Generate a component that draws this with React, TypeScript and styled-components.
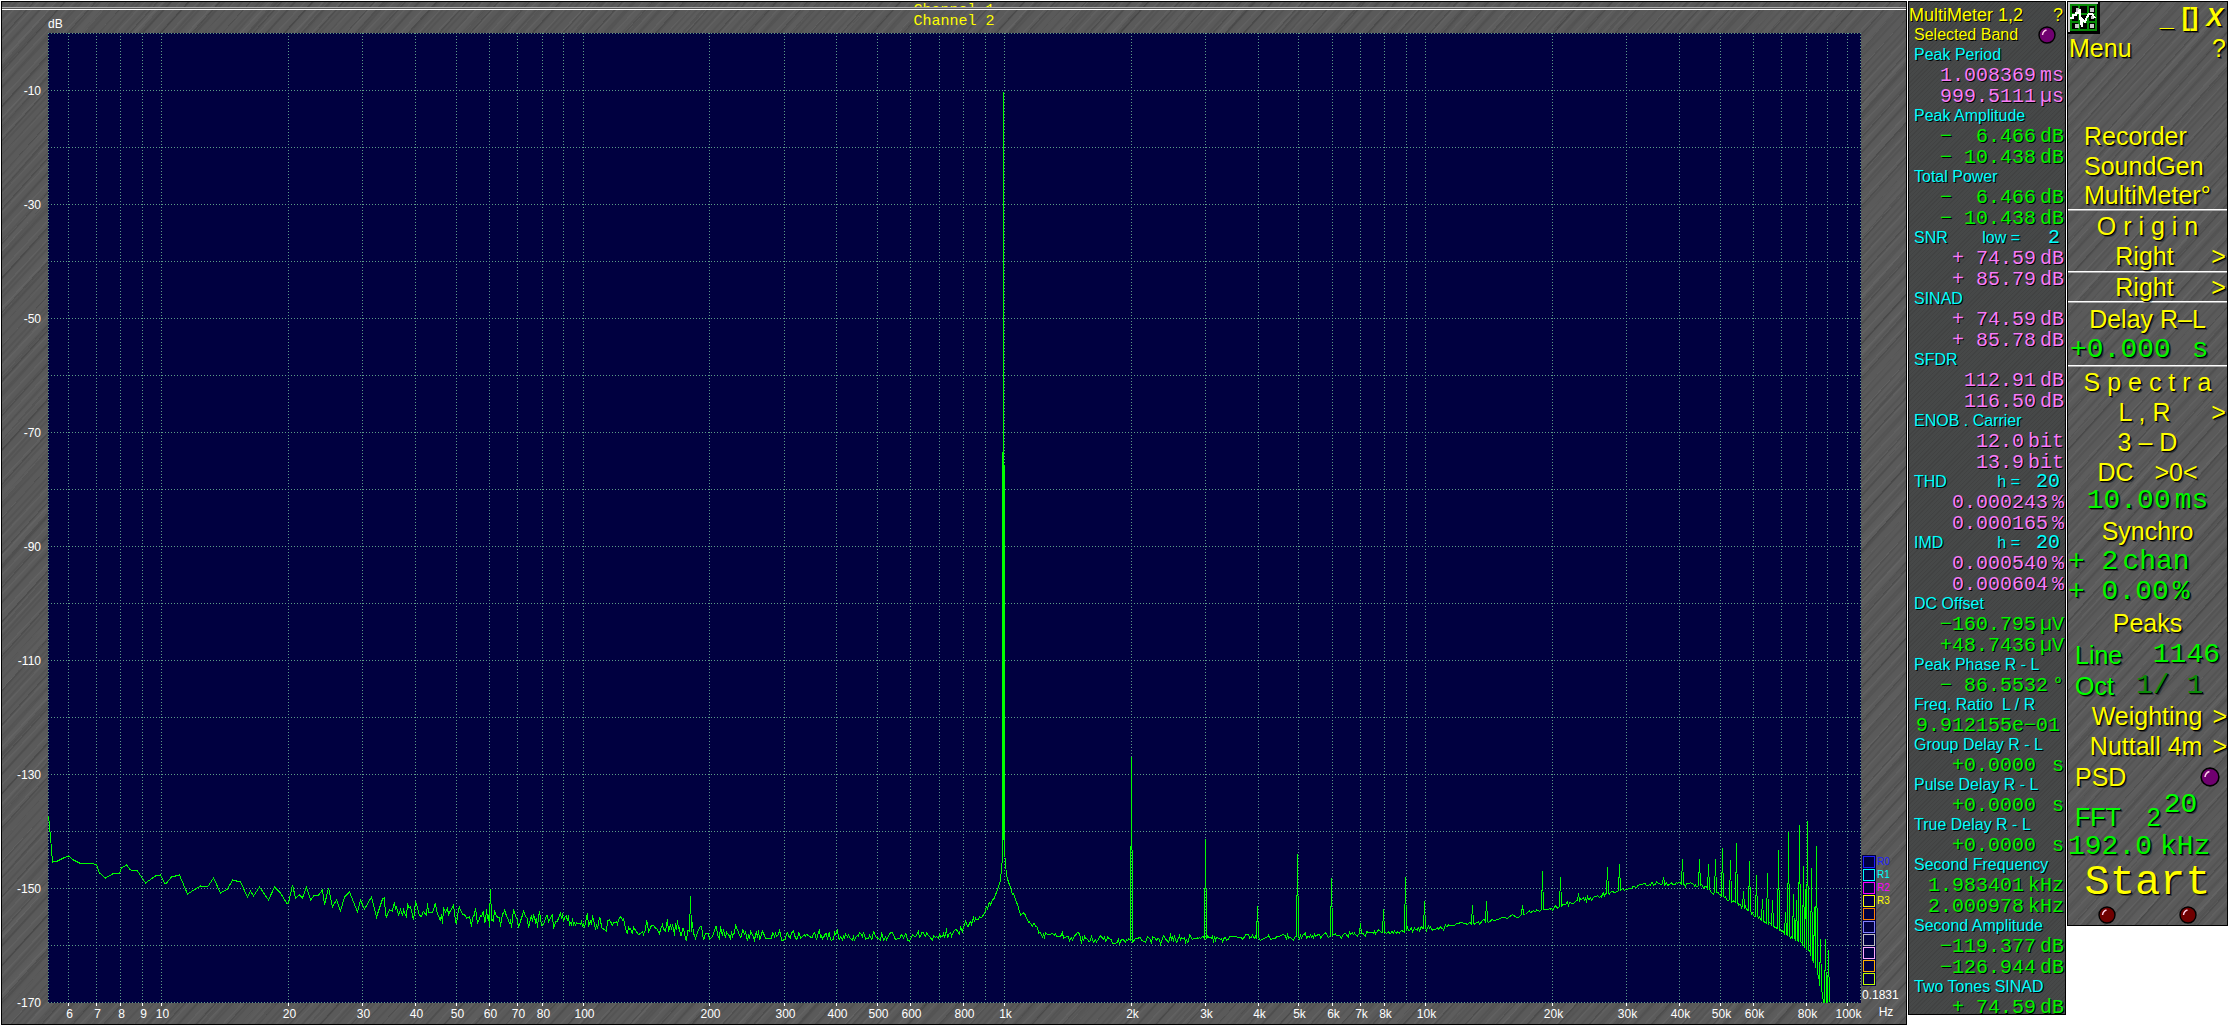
import React from "react";
import styled, { createGlobalStyle, css } from "styled-components";

const SANS = '"Liberation Sans", Arial, sans-serif';
const MONO = '"Liberation Mono", "Courier New", monospace';

const YELLOW = "#ffff00";
const GREEN = "#00f400";
const CYAN = "#00ffff";
const PINK = "#f87cf8";
const DIM_GREEN = "#0a8a0a";

const GlobalStyle = createGlobalStyle`
  * { box-sizing: border-box; }
  body { margin: 0; background: #fff; font-family: ${SANS}; }
  button {
    appearance: none;
    background: none;
    border: 0;
    padding: 0;
    margin: 0;
    font: inherit;
    color: inherit;
    text-shadow: inherit;
    line-height: inherit;
    white-space: pre;
    cursor: pointer;
  }
`;

const brushed = css`
  background-color: #5a5a5a;
  background-image:
    repeating-linear-gradient(132deg, rgba(0, 0, 0, 0.13) 0 1px, transparent 2px 9px, rgba(0, 0, 0, 0.07) 10px 11px, transparent 12px 23px),
    repeating-linear-gradient(133deg, rgba(255, 255, 255, 0.04) 0 1px, transparent 2px 5px, rgba(0, 0, 0, 0.07) 6px 7px, transparent 8px 13px),
    repeating-linear-gradient(131deg, rgba(0, 0, 0, 0.05) 0 2px, transparent 5px 31px, rgba(255, 255, 255, 0.02) 36px 41px);
`;

const Desk = styled.main`
  display: flex;
  align-items: flex-start;
  gap: 1px;
  padding: 1px;
`;

const Analyser = styled.section`
  flex: 1;
  min-width: 0;
  border: 1px solid #000;
  ${brushed}
`;

const ChannelStrip = styled.div`
  height: 5px;
  overflow: hidden;
  text-align: center;
  font: 15px/17px ${MONO};
  color: ${YELLOW};
`;

const StripEdge = styled.div`
  height: 3px;
  background: #555;
  border-top: 1px solid #aaa;
  border-bottom: 1px solid #fff;
`;

const TitleRow = styled.header`
  display: grid;
  grid-template-columns: 1fr auto 1fr;
  height: 23px;
  line-height: 23px;
  color: #fff;
`;

const AxisUnit = styled.span`
  padding: 3px 0 0 46px;
  font-size: 12px;
`;

const ChannelTitle = styled.h1`
  margin: 0;
  font: 15px/23px ${MONO};
  color: ${YELLOW};
`;

const PlotRow = styled.div`
  display: flex;
`;

const PlotArea = styled.div`
  flex: 1;
  min-width: 0;
`;

const PlotSvg = styled.svg`
  display: block;
  width: 100%;
  height: auto;
  font: 12px ${SANS};
`;

const Side = styled.aside`
  width: 44px;
  display: flex;
  flex-direction: column;
  justify-content: flex-end;
  font-size: 12px;
  line-height: 17px;
  color: #fff;
  padding-bottom: 3px;
`;

const Legend = styled.div`
  display: flex;
  flex-direction: column;
  gap: 1px;
  margin-bottom: 2px;
`;

const LegendButton = styled.button<{ $tone: string }>`
  display: flex;
  align-items: center;
  gap: 1px;
  height: 12px;
  font-size: 10px;
  line-height: 12px;
  color: ${(p) => p.$tone};

  &::before {
    content: "";
    width: 12px;
    height: 12px;
    background: #000040;
    border: 1px solid #000040;
    box-shadow: inset 0 0 0 1px ${(p) => p.$tone};
  }
`;

const SideUnit = styled.span`
  padding-left: 4px;
  text-align: center;
`;

const Meter = styled.section`
  width: 158px;
  height: 1014px;
  overflow: hidden;
  border: 1px solid #000;
  padding-top: 3px;
  background-color: #464848;
  background-image: repeating-linear-gradient(135deg, rgba(0, 0, 0, 0.08) 0 1px, transparent 1px 3px);
  text-shadow: 1px 1px 0 #000;
  white-space: pre;
`;

const MeterHead = styled.div<{ $title?: boolean }>`
  display: flex;
  justify-content: space-between;
  align-items: center;
  height: 20px;
  padding: 0 ${(p) => (p.$title ? 2 : 9)}px 0 ${(p) => (p.$title ? 0 : 5)}px;
  font-size: ${(p) => (p.$title ? 18 : 16)}px;
  line-height: 20px;
  color: ${YELLOW};
`;

const MeterLabel = styled.div`
  display: flex;
  justify-content: space-between;
  height: 19px;
  padding: 0 5px;
  font-size: 16px;
  line-height: 19px;
  color: ${CYAN};
`;

const Setting = styled.span`
  display: flex;
  gap: 16px;
`;

const Digits = styled.span`
  font-family: ${MONO};
  font-size: 20px;
`;

const MeterValue = styled.div<{ $tone: string }>`
  display: flex;
  justify-content: flex-end;
  gap: 4px;
  height: 21px;
  padding-right: 1px;
  font: 20px/23px ${MONO};
  color: ${(p) => p.$tone};
`;

const Menu = styled.nav`
  width: 161px;
  border: 1px solid #000;
  font-size: 25px;
  color: ${YELLOW};
  text-shadow: 1px 1px 0 #000, 2px 2px 0 rgba(0, 0, 0, 0.4);
  white-space: pre;
  ${brushed}
`;

const WindowBar = styled.div`
  display: flex;
  align-items: flex-start;
  height: 32px;
`;

const WindowButtons = styled.div`
  flex: 1;
  display: flex;
  justify-content: flex-end;
  gap: 8px;
  padding-right: 4px;
  font-size: 25px;
  font-weight: bold;
  line-height: 30px;
`;

const CloseMark = styled.span`
  font-style: italic;
`;

const Row = styled.div<{
  $h?: number;
  $tone?: string;
  $mono?: boolean;
  $align?: string;
  $pad?: number;
  $gap?: number;
}>`
  display: flex;
  align-items: center;
  justify-content: ${(p) => p.$align ?? "center"};
  gap: ${(p) => p.$gap ?? 0}px;
  height: ${(p) => p.$h ?? 30}px;
  padding: 0 ${(p) => p.$pad ?? 0}px;
  color: ${(p) => p.$tone ?? YELLOW};
  line-height: 28px;
  ${(p) => p.$mono && css`font-family: ${MONO}; font-size: 28px;`}
`;

const Pick = styled.button`
  display: grid;
  grid-template-columns: 11px 1fr 17px;
  align-items: center;
  width: 100%;

  &::before { content: ""; }
`;

const PickFar = styled.button`
  display: flex;
  justify-content: flex-end;
  gap: 10px;
  width: 100%;
  align-items: center;
`;

const Gap = styled.div`
  height: 59px;
`;

const Rule = styled.hr`
  height: 2px;
  margin: 0;
  border: 0;
  background: #fff;
  border-bottom: 1px solid #aaa;
`;

const Num = styled.span<{ $tone?: string }>`
  font-family: ${MONO};
  font-size: 28px;
  color: ${(p) => p.$tone ?? "inherit"};
`;

const Fft = styled.span`
  padding: 8px 3px 0 26px;
`;

const FftLabel = styled.span`
  padding-top: 8px;
`;

const Power = styled.sup`
  font: 28px/24px ${MONO};
  vertical-align: baseline;
  align-self: flex-start;
`;

const StartButton = styled.button`
  display: block;
  width: 100%;
  height: 44px;
  font: 42px/44px ${MONO};
`;

const Lamps = styled.div`
  display: flex;
  justify-content: space-between;
  height: 20px;
  padding: 1px 30px;
`;

const LampSvg = styled.svg`
  display: block;
`;

const Lamp = ({ size, tone }: { size: number; tone: string }) => (
  <LampSvg width={size} height={size} viewBox="0 0 18 18" aria-hidden="true">
    <circle cx="9" cy="9" r="8" fill={tone} stroke="#000" strokeWidth="1.4" />
    <path d="M4.5 9 Q5 5 8.5 4" stroke="#ffd0e8" strokeWidth="1.4" fill="none" />
  </LampSvg>
);

const AppIcon = () => (
  <svg width="32" height="32" viewBox="0 0 32 32" aria-label="Analyser" role="img">
    <rect width="32" height="32" fill="#000" />
    <path d="M0 0H30V2H2V30H0Z" fill="#c8c8c8" />
    <rect x="2" y="2" width="27" height="27" fill="#000" />
    <path d="M2 3H29M2 12H29M2 20H29M2 28H29M3 2V29M11 2V29M20 2V29M28 2V29" stroke="#078a07" strokeWidth="2" />
    <path d="M8 6h3v4h-3zM22 6h4v4h-4zM23 14h3v3h-3zM7 22h4v4h-4zM22 22h4v4h-4z" fill="#c8c8c8" />
    <path d="M2 16H5V13H8V11H10L12 7V16L14 25V17L17 20L19 15L21 12H24L27 16" stroke="#fff" strokeWidth="2" fill="none" shapeRendering="crispEdges" />
  </svg>
);

/* ---- spectrum plot geometry ---- */

const LEFT = 48;
const RIGHT = 1860;
const TOP = 33;
const BOTTOM = 1002;
const freqX = (f: number) => Math.round(161.3 + 421.3 * Math.log10(f / 10)) + 0.5;
const levelY = (db: number) => TOP - db * 5.7 + 0.5;

const GRID: number[] = [];
for (let decade = 1; decade <= 100000; decade *= 10)
  for (let n = 1; n < 10; n++) {
    const f = n * decade;
    if (f >= 6 && f <= 100000) GRID.push(f);
  }
const UNLABELLED = [90, 700, 900, 9000, 70000, 90000];
const LABELLED = GRID.filter((f) => !UNLABELLED.includes(f));
const freqText = (f: number) => (f >= 1000 ? `${f / 1000}k` : `${f}`);

type Pt = [number, number];

const LOW_END: Pt[] = [
  [48, 816], [50, 837], [52, 862], [57, 861], [63, 858], [68, 856], [73, 860], [79, 863], [91, 863], [96, 865],
  [99, 873], [105, 878], [112, 874], [119, 873], [121, 868], [126, 865], [130, 870], [137, 871], [145, 883],
  [155, 876], [160, 875], [164, 883], [166, 883], [171, 877], [179, 875], [187, 894], [200, 886], [207, 887],
  [213, 878], [220, 893], [227, 889], [232, 880], [240, 882], [247, 897], [250, 891], [253, 896], [259, 887],
  [268, 900], [274, 887], [280, 893], [286, 903], [288, 903], [292, 885], [295, 898], [299, 895], [302, 898],
  [306, 887], [310, 900], [314, 895], [318, 895], [322, 890], [324, 905], [328, 888], [332, 907], [336, 900],
  [340, 911], [344, 897], [349, 892], [357, 912], [360, 900], [364, 909], [371, 897], [376, 917], [382, 899],
];

const FLOOR: Pt[] = [
  [383, 906], [420, 911], [460, 914], [490, 918], [540, 921], [583, 923], [620, 925], [680, 931], [710, 933],
  [783, 935], [877, 937], [908, 936], [940, 934], [953, 932], [968, 926], [982, 915], [993, 900], [1000, 880],
  [1002, 857], [1004, 850], [1006, 875], [1011, 890], [1020, 912], [1033, 925], [1042, 934], [1069, 937],
  [1087, 939], [1131, 940], [1240, 938], [1324, 936], [1358, 934], [1391, 932], [1425, 929], [1459, 925],
  [1492, 920], [1526, 913], [1551, 908], [1577, 901], [1606, 894], [1636, 886], [1644, 884], [1678, 883],
  [1699, 886], [1716, 893], [1737, 903], [1758, 917], [1779, 930], [1800, 943], [1810, 953], [1816, 968],
  [1821, 990], [1823, 1002], [1860, 1002],
];

const SPREAD: Pt[] = [[383, 9], [600, 8], [700, 7], [800, 5], [980, 4], [1000, 2], [1060, 4], [1240, 3], [1500, 2], [1860, 2]];

const PEAKS: Pt[] = [
  [490, 889], [690, 896], [1003, 92], [1131, 757], [1205, 839], [1257, 906], [1297, 854], [1331, 878], [1360, 923],
  [1383, 909], [1405, 877], [1424, 901], [1472, 905], [1486, 901], [1522, 905], [1542, 871], [1560, 877],
  [1578, 893], [1607, 867], [1619, 864], [1663, 877], [1682, 859], [1699, 859], [1708, 864], [1715, 859],
  [1722, 848], [1730, 860], [1736, 843], [1743, 891], [1749, 861], [1756, 875], [1762, 899], [1767, 873],
  [1772, 900], [1778, 850], [1785, 912], [1788, 832], [1793, 894], [1796, 900], [1799, 825], [1803, 866],
  [1805, 889], [1807, 821], [1811, 868], [1814, 907], [1816, 846], [1820, 939], [1825, 939], [1828, 950],
];

const interpolate = (pts: Pt[], x: number) => {
  let i = 1;
  while (i < pts.length - 1 && pts[i][0] < x) i++;
  const [x0, y0] = pts[i - 1];
  const [x1, y1] = pts[i];
  return y0 + ((y1 - y0) * (x - x0)) / (x1 - x0);
};

const buildTrace = () => {
  let seed = 41;
  const random = () => {
    seed = (seed * 16807) % 2147483647;
    return seed / 2147483647;
  };
  const pts: Pt[] = [...LOW_END];
  for (let x = 384; x < 1830; x++) {
    const peak = PEAKS.find((p) => p[0] === x);
    const floor = interpolate(FLOOR, x);
    if (peak) {
      pts.push([x - 1, floor], [x, peak[1]], [x + 1, floor]);
      continue;
    }
    const swing = (random() + random() - 1) * interpolate(SPREAD, x) * 1.5;
    if (x > 1822) pts.push([x, BOTTOM]);
    else if (random() > 0.3) pts.push([x, floor + swing]);
  }
  return "M" + pts.map(([x, y]) => `${x + 0.5} ${Math.min(BOTTOM, y).toFixed(1)}`).join("L");
};

const TRACE = buildTrace();
const DECIBELS = Array.from({ length: 18 }, (_, i) => -10 * i);

const Spectrum = () => (
  <PlotSvg viewBox="2 33 1860 991" role="img" aria-label="Spectrum, level against frequency">
    <rect x={LEFT} y={TOP} width={RIGHT - LEFT + 1} height={BOTTOM - TOP + 1} fill="#000040" />
    <g stroke="#5c9c88" strokeDasharray="1 2" shapeRendering="crispEdges">
      {[LEFT + 0.5, ...GRID.map(freqX), RIGHT + 0.5].map((x) => (
        <line key={x} x1={x} x2={x} y1={TOP} y2={BOTTOM} />
      ))}
      {DECIBELS.map((db) => (
        <line key={db} x1={LEFT} x2={RIGHT} y1={levelY(db)} y2={levelY(db)} />
      ))}
    </g>
    <path d={TRACE} fill="none" stroke="#00ff00" shapeRendering="crispEdges" />
    <path d="M1002.5 857V780M1003.5 92V840M1004.5 850V465" stroke="#00ff00" shapeRendering="crispEdges" />
    <g stroke="#fff" shapeRendering="crispEdges">
      {LABELLED.map((f) => (
        <line key={f} x1={freqX(f)} x2={freqX(f)} y1={BOTTOM + 1} y2={BOTTOM + 4} />
      ))}
    </g>
    <g fill="#fff" textAnchor="middle">
      {LABELLED.map((f) => (
        <text key={f} x={freqX(f) + 1} y="1018">{freqText(f)}</text>
      ))}
    </g>
    <g fill="#fff" textAnchor="end">
      {DECIBELS.filter((db) => db % 20 !== 0).map((db) => (
        <text key={db} x="41" y={levelY(db) + 4}>{db}</text>
      ))}
    </g>
  </PlotSvg>
);

const TONES: [string, string][] = [
  ["#2020ff", "R0"], ["#00ffff", "R1"], ["#ff00ff", "R2"], ["#ffff00", "R3"], ["#ff8000", ""],
  ["#8080ff", ""], ["#c0c0c0", ""], ["#ffa8ff", ""], ["#ffb000", ""], ["#c0ff00", ""],
];

type Reading = { label: string; setting?: [string, string]; tone: string; values: [string, string][] };

const READINGS: Reading[] = [
  { label: "Peak Period", tone: PINK, values: [["1.008369", "ms"], ["999.5111", "µs"]] },
  { label: "Peak Amplitude", tone: GREEN, values: [["−  6.466", "dB"], ["− 10.438", "dB"]] },
  { label: "Total Power", tone: GREEN, values: [["−  6.466", "dB"], ["− 10.438", "dB"]] },
  { label: "SNR", setting: ["low =", " 2"], tone: PINK, values: [["+ 74.59", "dB"], ["+ 85.79", "dB"]] },
  { label: "SINAD", tone: PINK, values: [["+ 74.59", "dB"], ["+ 85.78", "dB"]] },
  { label: "SFDR", tone: PINK, values: [["112.91", "dB"], ["116.50", "dB"]] },
  { label: "ENOB . Carrier", tone: PINK, values: [["12.0", "bit"], ["13.9", "bit"]] },
  { label: "THD", setting: ["h =", "20"], tone: PINK, values: [["0.000243", "%"], ["0.000165", "%"]] },
  { label: "IMD", setting: ["h =", "20"], tone: PINK, values: [["0.000540", "%"], ["0.000604", "%"]] },
  { label: "DC Offset", tone: GREEN, values: [["−160.795", "µV"], ["+48.7436", "µV"]] },
  { label: "Peak Phase R - L", tone: GREEN, values: [["− 86.5532", "°"]] },
  { label: "Freq. Ratio  L / R", tone: GREEN, values: [["9.912155e−01", ""]] },
  { label: "Group Delay R - L", tone: GREEN, values: [["+0.0000", " s"]] },
  { label: "Pulse Delay R - L", tone: GREEN, values: [["+0.0000", " s"]] },
  { label: "True Delay R - L", tone: GREEN, values: [["+0.0000", " s"]] },
  { label: "Second Frequency", tone: GREEN, values: [["1.983401", "kHz"], ["2.000978", "kHz"]] },
  { label: "Second Amplitude", tone: GREEN, values: [["−119.377", "dB"], ["−126.944", "dB"]] },
  { label: "Two Tones SINAD", tone: GREEN, values: [["+ 74.59", "dB"]] },
];

export default function App() {
  return (
    <Desk>
      <GlobalStyle />
      <Analyser>
        <ChannelStrip>Channel 1</ChannelStrip>
        <StripEdge />
        <TitleRow>
          <AxisUnit>dB</AxisUnit>
          <ChannelTitle>Channel 2</ChannelTitle>
        </TitleRow>
        <PlotRow>
          <PlotArea>
            <Spectrum />
          </PlotArea>
          <Side>
            <Legend>
              {TONES.map(([tone, name], i) => (
                <LegendButton key={tone} $tone={tone} aria-label={`Trace ${i}`}>{name}</LegendButton>
              ))}
            </Legend>
            <span>0.1831</span>
            <SideUnit>Hz</SideUnit>
          </Side>
        </PlotRow>
      </Analyser>

      <Meter>
        <MeterHead $title>
          <span>MultiMeter 1,2</span>
          <button>?</button>
        </MeterHead>
        <MeterHead>
          <button>Selected Band</button>
          <Lamp size={18} tone="#700070" />
        </MeterHead>
        {READINGS.map(({ label, setting, tone, values }) => (
          <div key={label}>
            <MeterLabel>
              <span>{label}</span>
              {setting && (
                <Setting>
                  <span>{setting[0]}</span>
                  <Digits>{setting[1]}</Digits>
                </Setting>
              )}
            </MeterLabel>
            {values.map(([amount, unit], i) => (
              <MeterValue key={i} $tone={tone}>
                <span>{amount}</span>
                <span>{unit}</span>
              </MeterValue>
            ))}
          </div>
        ))}
      </Meter>

      <Menu>
        <WindowBar>
          <AppIcon />
          <WindowButtons>
            <button aria-label="Minimise">_</button>
            <button aria-label="Maximise">[]</button>
            <button aria-label="Close"><CloseMark>X</CloseMark></button>
          </WindowButtons>
        </WindowBar>
        <Row $h={28} $align="space-between" $pad={1}>
          <button>Menu</button>
          <button>?</button>
        </Row>
        <Gap />
        <Row $align="flex-start" $pad={16}><button>Recorder</button></Row>
        <Row $align="flex-start" $pad={16}><button>SoundGen</button></Row>
        <Row $h={28} $align="flex-start" $pad={16}><button>MultiMeter°</button></Row>
        <Rule />
        <Row>O r i g i n</Row>
        <Row><Pick><span>Right</span><span>&gt;</span></Pick></Row>
        <Rule />
        <Row $h={28}><Pick><span>Right</span><span>&gt;</span></Pick></Row>
        <Rule />
        <Row $h={32}>Delay R–L</Row>
        <Row $mono $tone={GREEN} $align="flex-start" $pad={2} $gap={4}><span>+0.000</span><span> s</span></Row>
        <Rule />
        <Row>S p e c t r a</Row>
        <Row><Pick><span>L , R</span><span>&gt;</span></Pick></Row>
        <Row><button>3 – D</button></Row>
        <Row><button>DC   &gt;0&lt;</button></Row>
        <Row $h={28} $mono $tone={GREEN} $gap={4}><span>10.00</span><span>ms</span></Row>
        <Row $h={32}><button>Synchro</button></Row>
        <Row $mono $tone={GREEN} $align="flex-start" $gap={4}><span>+ 2</span><span>chan</span></Row>
        <Row $mono $tone={GREEN} $align="flex-start" $gap={4}><span>+ 0.00</span><span>%</span></Row>
        <Row $h={32}><button>Peaks</button></Row>
        <Row $h={32} $tone="#00ff00" $align="space-between" $pad={7}><span>Line</span><Num $tone={GREEN}>1146</Num></Row>
        <Row $tone="#00ff00" $align="space-between" $pad={7}><span>Oct</span><Num $tone={DIM_GREEN}>1/ 1 </Num></Row>
        <Row><PickFar><span>Weighting</span><span>&gt;</span></PickFar></Row>
        <Row><PickFar><span>Nuttall 4m</span><span>&gt;</span></PickFar></Row>
        <Row $h={32} $align="space-between" $pad={7}><button>PSD</button><Lamp size={20} tone="#700070" /></Row>
        <Row $h={40} $tone="#00ff00" $align="flex-start" $pad={7}><FftLabel>FFT</FftLabel><Fft>2</Fft><Power>20</Power></Row>
        <Row $h={28} $mono $tone={GREEN} $align="flex-start" $gap={8}><span>192.0</span><span>kHz</span></Row>
        <StartButton>Start</StartButton>
        <Lamps>
          <Lamp size={18} tone="#700000" />
          <Lamp size={18} tone="#700000" />
        </Lamps>
      </Menu>
    </Desk>
  );
}
